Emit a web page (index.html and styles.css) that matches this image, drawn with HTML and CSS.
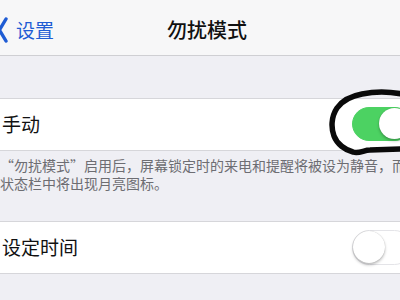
FILE: index.html
```html
<!DOCTYPE html>
<html lang="zh-CN">
<head>
    <meta charset="UTF-8">
    <meta name="viewport" content="width=device-width, initial-scale=1.0">
    <title>勿扰模式</title>
    <link rel="stylesheet" href="styles.css">
</head>
<body>
    <div class="screen">
        <header class="nav">
            <a class="back" href="#">
                <svg class="chevron" width="10" height="26" viewBox="0 0 10 26">
                    <path d="M8 2 L1.5 13 L8 24" fill="none" stroke="#1f5cd4" stroke-width="3.4" stroke-linecap="round" stroke-linejoin="round"/>
                </svg>
                <span>设置</span>
            </a>
            <h1 class="title">勿扰模式</h1>
            <div></div>
        </header>

        <div class="group">
            <div class="cell">
                <span class="cell-label">手动</span>
                <span class="switch on"><span class="knob"></span></span>
            </div>
        </div>
        <p class="note">“勿扰模式”启用后，屏幕锁定时的来电和提醒将被设为静音，而<br>状态栏中将出现月亮图标。</p>

        <div class="group">
            <div class="cell">
                <span class="cell-label">设定时间</span>
                <span class="switch"><span class="knob"></span></span>
            </div>
        </div>

        <!-- 手绘圈注 -->
        <svg class="scribble" width="400" height="300" viewBox="0 0 400 300">
            <path d="M402 94 C386 91 372 92 362 94 C351 96 342 101 337 108 C331 117 331 128 334 136 C337 144 345 150 353 152 C359 154 364 150 370 150 L402 149"
                  fill="none" stroke="#0a0a0a" stroke-width="5.5" stroke-linecap="round" stroke-linejoin="round"/>
        </svg>
    </div>
</body>
</html>
```

FILE: styles.css
```css
:root {
    --blue: #1f5cd4;
    --green: #4cd262;
    --bg: #efeff4;
    --line: #d6d6da;
    --muted: #6d6d72;
}

html, body {
    margin: 0;
    padding: 0;
    width: 400px;
    height: 300px;
    overflow: hidden;
}

body {
    font-family: "Noto Sans CJK SC", "Noto Sans", sans-serif;
    background-color: var(--bg);
    color: #111;
}

.screen {
    position: relative;
    width: 400px;
    height: 300px;
}

.nav {
    display: grid;
    grid-template-columns: 1fr auto 1fr;
    align-items: center;
    height: 56px;
    padding: 4px 0 0 14px;
    box-sizing: border-box;
    background-color: #f7f7f8;
    border-bottom: 1px solid #cfcfd3;
}

.back {
    display: flex;
    align-items: center;
    gap: 8px;
    margin-left: -16px;
    color: var(--blue);
    text-decoration: none;
    font-size: 19px;
}

.chevron {
    display: block;
}

.title {
    margin: 0;
    font-size: 20px;
    font-weight: 500;
    color: #111;
}

.group {
    background-color: #fff;
    border-top: 1px solid var(--line);
    border-bottom: 1px solid var(--line);
}

.nav + .group {
    margin-top: 42px;
}

.cell {
    display: flex;
    align-items: center;
    justify-content: space-between;
    height: 51px;
    padding-left: 2px;
}

.cell-label {
    font-size: 19px;
    margin-top: -2px;
}

.switch {
    position: relative;
    flex: none;
    width: 60px;
    height: 35px;
    margin-right: -12px;
    border-radius: 18px;
    box-sizing: border-box;
    border: 1.5px solid #e4e4e8;
    background-color: #fff;
}

.switch.on {
    background-color: var(--green);
    border-color: var(--green);
    height: 34px;
    margin-top: -2px;
}

.knob {
    position: absolute;
    top: 0;
    left: 0;
    width: 32px;
    height: 32px;
    border-radius: 50%;
    background-color: #fff;
    box-shadow: 0 2px 3px rgba(0, 0, 0, 0.25), 0 0 1px rgba(0, 0, 0, 0.25);
}

.switch.on .knob {
    left: auto;
    right: 1px;
    width: 31px;
    height: 31px;
}

.note {
    margin: 0;
    padding: 5px 0 29px 0;
    font-size: 14px;
    line-height: 18px;
    color: var(--muted);
    white-space: nowrap;
}

.scribble {
    position: absolute;
    top: 0;
    left: 0;
    pointer-events: none;
}
```
